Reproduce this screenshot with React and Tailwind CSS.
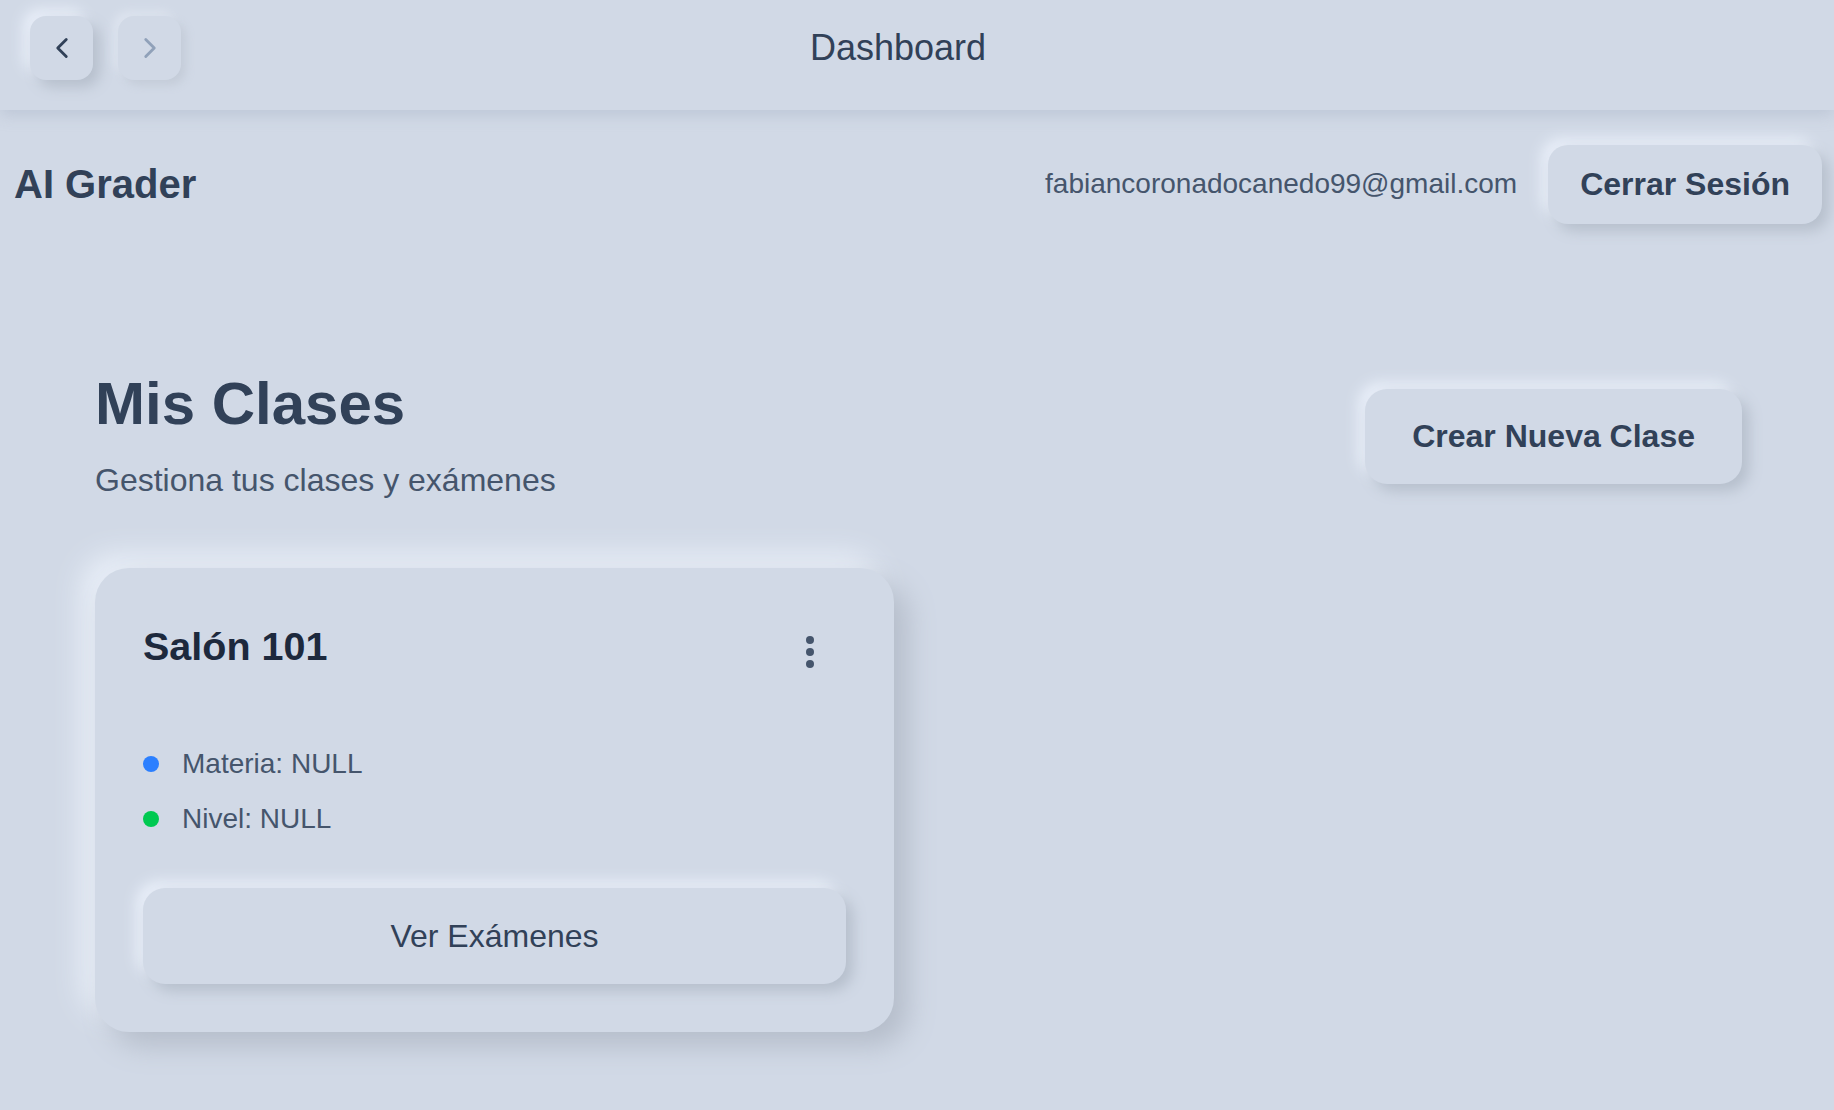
import { ChevronLeft, ChevronRight } from "lucide-react";

const raised =
  "bg-[#d1d9e6] shadow-[7px_7px_14px_#b6bfcc,-7px_-7px_14px_#e9eff9]";

const classInfo = [
  { label: "Materia: NULL", dot: "bg-blue-500" },
  { label: "Nivel: NULL", dot: "bg-green-500" },
];

function ClassCard() {
  return (
    <div className="mt-16 w-[799px] rounded-[34px] bg-[#d1d9e6] p-12 shadow-[14px_14px_28px_#b5bdca,-14px_-14px_28px_#e9eff8]">
      <div className="flex items-start justify-between">
        <h3 className="pt-[2px] text-[39.5px] font-bold leading-[56px] text-slate-800">
          Salón 101
        </h3>
        <button className="mr-8 mt-5 flex flex-col items-center gap-1">
          <span className="h-2 w-2 rounded-full bg-slate-600" />
          <span className="h-2 w-2 rounded-full bg-slate-600" />
          <span className="h-2 w-2 rounded-full bg-slate-600" />
        </button>
      </div>

      <div className="mt-[69px] flex flex-col gap-[13px]">
        {classInfo.map((item) => (
          <div key={item.label} className="flex items-center gap-[23px]">
            <span className={`h-4 w-4 shrink-0 rounded-full ${item.dot}`} />
            <span className="text-[28px] leading-[42px] text-slate-600">
              {item.label}
            </span>
          </div>
        ))}
      </div>

      <button
        className={`mt-12 flex h-[96px] w-full items-center justify-center rounded-[22px] text-[32px] text-slate-700 ${raised}`}
      >
        Ver Exámenes
      </button>
    </div>
  );
}

export default function App() {
  return (
    <div className="min-h-screen bg-[#d1d9e6] font-['Liberation_Sans',Arial,sans-serif] text-slate-700">
      {/* Title bar */}
      <div className="relative z-10 flex h-[110px] items-start bg-[#d1d9e6] pt-4 shadow-[0_5px_14px_rgba(160,172,192,0.4)]">
        <div className="flex gap-[25px] pl-[30px]">
          <button
            className={`flex h-16 w-[63px] items-center justify-center rounded-2xl ${raised}`}
          >
            <ChevronLeft size={34} className="text-slate-700" />
          </button>
          <button className="flex h-16 w-[63px] items-center justify-center rounded-2xl bg-[#d1d9e6] shadow-[5px_5px_10px_#c4ccd8,-5px_-5px_10px_#dde4ef]">
            <ChevronRight size={34} className="text-slate-400" />
          </button>
        </div>
        <h1 className="ml-[629px] text-[36px] leading-[64px]">Dashboard</h1>
      </div>

      {/* App header */}
      <div className="flex h-[148px] items-center justify-between pl-[14px] pr-[12px]">
        <span className="text-[40px] font-bold">AI Grader</span>
        <div className="flex items-center gap-[31px]">
          <span className="text-[28px] text-slate-600">
            fabiancoronadocanedo99@gmail.com
          </span>
          <button
            className={`h-[79px] rounded-[20px] px-[32px] text-[32px] font-bold ${raised}`}
          >
            Cerrar Sesión
          </button>
        </div>
      </div>

      {/* Content */}
      <main className="pl-[95px] pr-[92px] pt-[110px]">
        <div className="flex items-center justify-between">
          <div>
            <h2 className="text-[60px] font-bold leading-[1.2]">Mis Clases</h2>
            <p className="mt-4 text-[32px] leading-[1.5] text-slate-600">
              Gestiona tus clases y exámenes
            </p>
          </div>
          <button
            className={`h-[95px] rounded-[22px] px-[47px] text-[32px] font-bold ${raised}`}
          >
            Crear Nueva Clase
          </button>
        </div>

        <ClassCard />
      </main>
    </div>
  );
}
